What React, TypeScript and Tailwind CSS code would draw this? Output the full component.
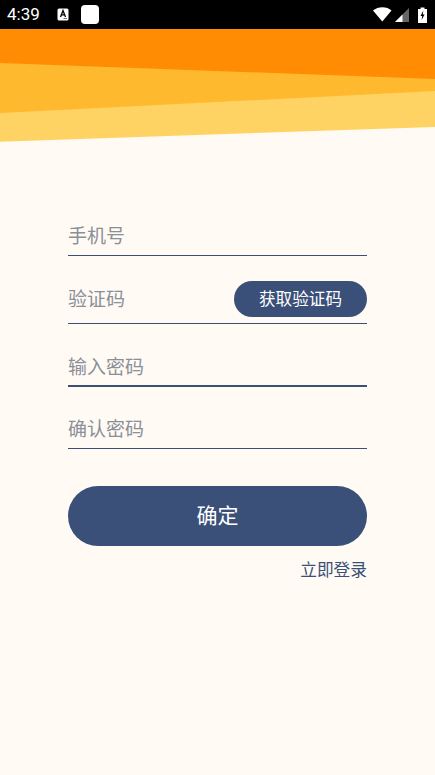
const cjk = "font-['Roboto','Noto_Sans_CJK_SC',sans-serif]";

function Field({ label, thick, h, labelClass, children }: { label: string; thick?: boolean; h: string; labelClass?: string; children?: React.ReactNode }) {
  return (
    <div className={`flex items-center justify-between border-b-[#3a5078] ${thick ? 'border-b-2' : 'border-b'} ${h}`}>
      <span className={`text-[19px] leading-[26px] text-[#8b8f98] ${labelClass ?? ''}`}>{label}</span>
      {children}
    </div>
  );
}

export default function App() {
  return (
    <div className={`flex h-[775px] w-[435px] flex-col overflow-hidden bg-[#fffbf4] ${cjk}`}>
      <div className="flex h-[29px] shrink-0 items-center justify-between bg-black pl-[7px] pr-[8px] text-white">
        <div className="flex items-center">
          <span className="font-['Roboto'] text-[17px] leading-none">4:39</span>
          <svg className="ml-[17px]" width="12" height="13" viewBox="0 0 12 13">
            <rect x="0.5" y="0.5" width="11" height="12" rx="1.5" fill="#fff" />
            <path d="M3.5 9 L6 2.5 L8.5 9 M4.5 6.8 H7.5" stroke="#000" strokeWidth="1.3" fill="none" />
            <rect x="6.5" y="10" width="3.5" height="1" fill="#777" />
          </svg>
          <div className="ml-[12px] h-[19px] w-[18px] rounded-[4px] bg-white" />
        </div>
        <div className="flex items-center">
          <svg width="19" height="15" viewBox="0 0 19 15">
            <path d="M0 3.5 C5 -1 14 -1 18.5 3.5 L9.3 14.5 Z" fill="#fff" />
          </svg>
          <svg className="ml-[3px]" width="14" height="14" viewBox="0 0 14 14">
            <path d="M14 0 V14 H0 Z" fill="#666" />
            <path d="M7.5 6.5 V14 H0 Z" fill="#fff" />
          </svg>
          <svg className="ml-[9px]" width="9" height="16" viewBox="0 0 9 16">
            <path d="M0 2 H2.5 V0.5 H6.5 V2 H9 V16 H0 Z" fill="#fff" />
            <path d="M5.3 3.5 L2.5 9 H4.2 L3.6 13 L6.6 7.4 H4.8 Z" fill="#000" />
          </svg>
        </div>
      </div>

      <svg className="block shrink-0" width="435" height="113" viewBox="0 0 435 113">
        <rect width="435" height="113" fill="#ff8c03" />
        <path d="M0 34 L435 50 V113 H0 Z" fill="#ffb92f" />
        <path d="M0 84 L435 62 V113 H0 Z" fill="#ffd363" />
        <path d="M0 112.7 L435 98 V113 H0 Z" fill="#fffbf4" />
      </svg>

      <div className="flex flex-col px-[68px] pt-[76px]">
        <Field label="手机号" h="h-[38px]" />
        <Field label="验证码" labelClass="pt-[2px]" h="mt-[25px] h-[43px] pb-[6px]">
          <button className="flex h-[36px] w-[133px] items-center justify-center rounded-full bg-[#3a5078] pt-[2px] text-[16.6px] text-white">
            获取验证码
          </button>
        </Field>
        <Field label="输入密码" thick h="mt-[25px] h-[38px] pt-[2px]" />
        <Field label="确认密码" h="mt-[24px] h-[38px]" />
        <button className="mt-[37px] flex h-[60px] items-center justify-center rounded-full bg-[#3a5078] pt-[2px] text-[21px] text-white">
          确定
        </button>
        <div className="mt-[15px] text-right text-[16.7px] leading-[20px] text-[#3a5078]">立即登录</div>
      </div>
    </div>
  );
}
